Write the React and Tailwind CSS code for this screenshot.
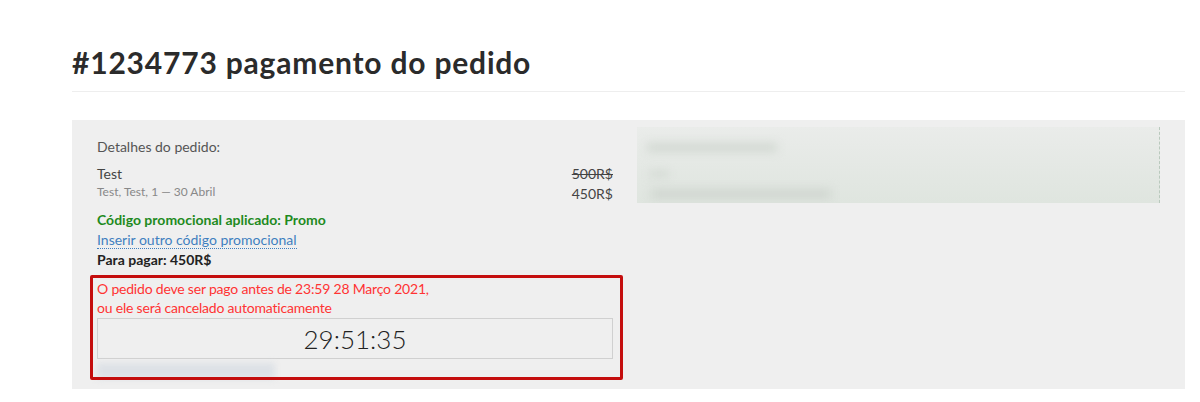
import React from 'react';

const OrderDetails = () => (
  <div className="pt-[10px] text-[14px] leading-[20px]">
    <div className="text-[#555]">Detalhes do pedido:</div>

    <div className="mt-[7px] flex justify-between">
      <div>
        <div className="text-[#444]">Test</div>
        <div className="text-[12px] leading-[16px] text-[#888]">Test, Test, 1 — 30 Abril</div>
      </div>
      <div className="text-right text-[#444]">
        <div className="line-through">500R$</div>
        <div>450R$</div>
      </div>
    </div>

    <div className="mt-[6px] font-bold text-[#1e8a1e]">Código promocional aplicado: Promo</div>
    <div>
      <a href="#" className="text-[#3f7fc0] border-b border-dotted border-[#3f7fc0]">Inserir outro código promocional</a>
    </div>
    <div className="font-bold text-[#222]">Para pagar: 450R$</div>

    {/* deadline + countdown */}
    <div className="relative mt-[9px]">
      <div className="text-[#ff3333] leading-[19px] tracking-[-0.2px]">
        O pedido deve ser pago antes de 23:59 28 Março 2021,<br />
        ou ele será cancelado automaticamente
      </div>
      <div className="mt-[1px] h-[41px] border border-[#d0d0d0] flex items-center justify-center text-[26px] font-light text-[#222]">
        29:51:35
      </div>
      <div className="mt-[4px] h-[16px] w-[178px] bg-[#dde1e6] blur-[3px]" />
      <div className="pointer-events-none absolute -left-[7px] -top-[4px] w-[533px] h-[105px] border-[3px] border-[#c40d0d] rounded-[2px]" />
    </div>
  </div>
);

const BlurredBlock = () => (
  <div className="relative h-[76px] overflow-hidden bg-gradient-to-b from-[#eaecea] to-[#dfe5df] border-r border-dashed border-[#b9c9bd]">
    <div className="absolute left-[10px] top-[16px] h-[9px] w-[130px] bg-[#d2d8d2] blur-[5px]" />
    <div className="absolute left-[12px] top-[43px] h-[8px] w-[20px] bg-[#d6dcd6] blur-[4px]" />
    <div className="absolute left-[14px] top-[62px] h-[10px] w-[180px] bg-[#d0d6d0] blur-[5px]" />
  </div>
);

export default function App() {
  return (
    <div className="min-h-[402px] bg-white px-[72px] pt-[40px] pb-[14px] [font-family:Lato,'Open_Sans',sans-serif] mr-[-57px]">
      <h1 className="text-[30px] leading-[44px] font-bold text-[#2b2b2b] tracking-[0.8px]">
        #1234773 pagamento do pedido
      </h1>
      <div className="mt-[7px] h-px bg-[#eeeeee]" />
      <div className="mt-[28px] w-[1113px] bg-[#efefef] pl-[25px] pr-[25px] pt-[7px] pb-[10px] grid grid-cols-[516px_1fr] gap-6 items-start">
        <OrderDetails />
        <BlurredBlock />
      </div>
    </div>
  );
}
